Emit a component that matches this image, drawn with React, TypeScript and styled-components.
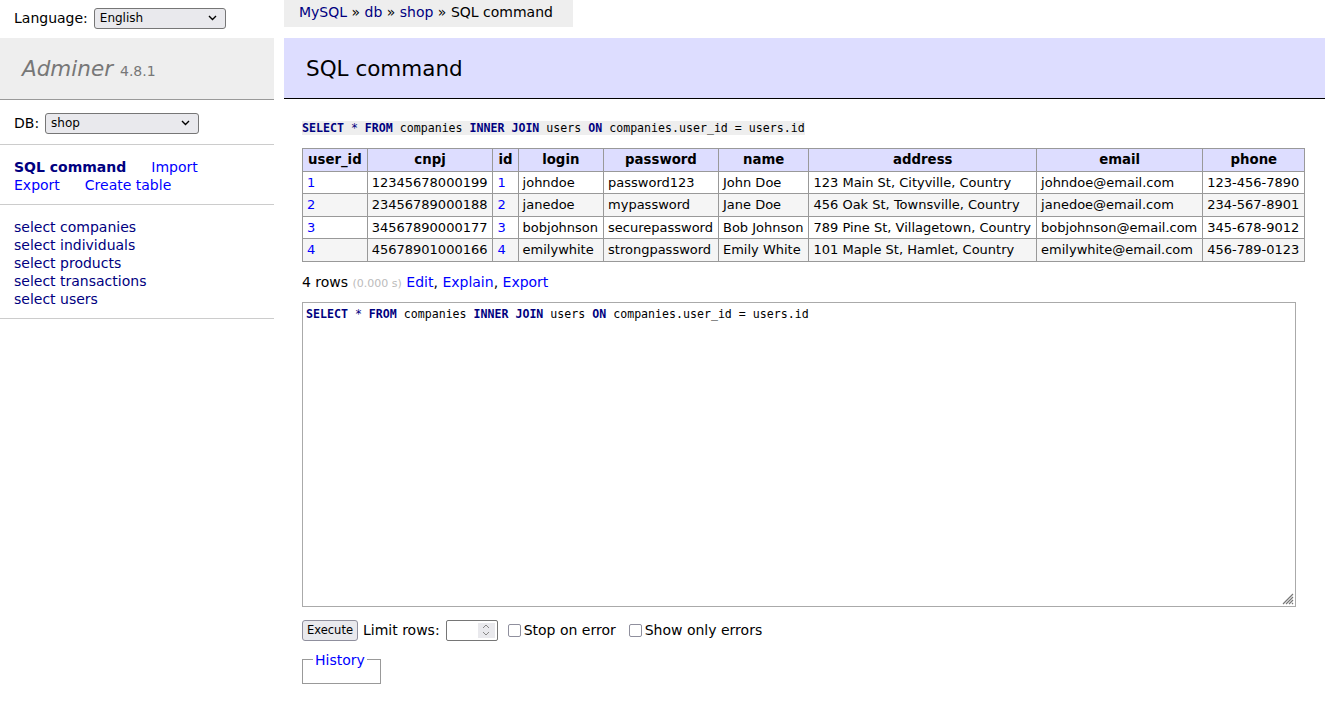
import styled, { createGlobalStyle } from "styled-components";

const GlobalStyle = createGlobalStyle`
  body {
    margin: 0;
    font: 14px/18px "DejaVu Sans", Verdana, sans-serif;
    color: #000;
    background: #fff;
  }
  a {
    color: #00f;
    text-decoration: none;
  }
`;

const Page = styled.div`
  display: flex;
  width: 1331px;
  min-height: 718px;
`;

const Sidebar = styled.div`
  width: 274px;
  flex-shrink: 0;
`;

const LangRow = styled.div`
  height: 38px;
  display: flex;
  align-items: center;
  padding-left: 14px;
  padding-bottom: 2px;
  gap: 6px;
  box-sizing: border-box;
`;

const Select = styled.div<{ w: number }>`
  width: ${(p) => p.w}px;
  height: 21px;
  box-sizing: border-box;
  border: 1px solid #767676;
  border-radius: 3px;
  background: #e9e9ed;
  display: flex;
  align-items: center;
  justify-content: space-between;
  padding: 0 8px 0 5px;
  font: 12px "DejaVu Sans", Arial, sans-serif;
  color: #000;
  svg {
    width: 9px;
    height: 6px;
  }
`;

const Logo = styled.div`
  height: 61px;
  background: #eee;
  border-bottom: 1px solid #999;
  display: flex;
  align-items: center;
  padding-left: 22px;
  color: #777;
  .name {
    font: italic 21.5px "DejaVu Sans", Verdana, sans-serif;
  }
  .ver {
    font-size: 14px;
    margin-left: 7px;
    margin-top: 5px;
  }
`;

const DbRow = styled.div`
  height: 45px;
  display: flex;
  align-items: center;
  padding-left: 14px;
  gap: 6px;
  border-bottom: 1px solid #ccc;
  padding-top: 2px;
  box-sizing: border-box;
`;

const MenuBlock = styled.div`
  padding: 13px 14px 10px;
  border-bottom: 1px solid #ccc;
`;

const Links = styled.div`
  display: flex;
  flex-wrap: wrap;
  width: 220px;
  column-gap: 25px;
  a.active {
    color: #000080;
    font-weight: bold;
  }
`;

const TableList = styled.ul`
  list-style: none;
  margin: 0;
  padding: 0;
  a {
    color: #000080;
  }
`;

const Content = styled.div`
  margin-left: 10px;
  width: 1041px;
`;

const Breadcrumb = styled.p`
  margin: 0;
  display: inline-block;
  background: #eee;
  padding: 0 15px 0 15px;
  height: 27px;
  line-height: 24px;
  width: 259px;
  a {
    color: #000080;
  }
`;

const Title = styled.h2`
  margin: 11px 0 0;
  height: 61px;
  box-sizing: border-box;
  background: #ddf;
  border-bottom: 1px solid #000;
  font: 21.5px/61px "DejaVu Sans", Verdana, sans-serif;
  padding-left: 22px;
`;

const Body = styled.div`
  padding-left: 18px;
`;

const Code = styled.code`
  display: inline-block;
  margin-top: 22px;
  background: #eee;
  font: 11.6px/14px "DejaVu Sans Mono", monospace;
  color: #000;
  b {
    color: #000080;
  }
`;

const Table = styled.table`
  margin-top: 12px;
  border-collapse: collapse;
  border: 1px solid #999;
  font-size: 13px;
  th,
  td {
    border: 1px solid #999;
    padding: 2px 5px 2px 4px;
    line-height: 17.5px;
    white-space: nowrap;
    text-align: left;
  }
  th {
    background: #ddf;
    text-align: center;
    padding: 2px 5px;
    font-size: 13.3px;
  }
  tbody tr:nth-child(2n) {
    background: #f5f5f5;
  }
`;

const Stats = styled.p`
  margin: 11px 0 0;
  .time {
    color: #bbb;
    font-size: 11px;
  }
`;

const Editor = styled.div`
  margin-top: 9px;
  width: 994px;
  height: 305px;
  box-sizing: border-box;
  border: 1px solid #aaa;
  position: relative;
  padding: 3px 3px;
  font: 11.6px/16px "DejaVu Sans Mono", monospace;
  b {
    color: #000080;
  }
  svg {
    position: absolute;
    right: 1px;
    bottom: 1px;
  }
`;

const Controls = styled.div`
  margin-top: 13px;
  display: flex;
  align-items: center;
  height: 21px;
`;

const Button = styled.div`
  height: 21px;
  box-sizing: border-box;
  border: 1px solid #8f8f9d;
  border-radius: 3px;
  background: #e9e9ed;
  font: 11.5px/19px "DejaVu Sans", Arial, sans-serif;
  padding: 0 4px;
  margin-right: 5px;
`;

const NumberInput = styled.div`
  width: 52px;
  height: 21px;
  box-sizing: border-box;
  border: 1px solid #767676;
  border-radius: 2px;
  margin-left: 6px;
  display: flex;
  justify-content: flex-end;
  padding: 2px;
  span {
    width: 17px;
    background: #e9e9ed;
    display: flex;
    align-items: center;
    justify-content: center;
  }
`;

const Check = styled.label`
  display: flex;
  align-items: center;
  margin-left: 10px;
  &::before {
    content: "";
    width: 13px;
    height: 13px;
    box-sizing: border-box;
    border: 1px solid #8f8f9d;
    border-radius: 2px;
    margin-right: 3px;
  }
  & + & {
    margin-left: 13px;
  }
`;

const History = styled.fieldset`
  margin: 11px 0 0;
  width: 79px;
  height: 32px;
  box-sizing: border-box;
  border: 1px solid #999;
  padding: 0;
  legend {
    margin-left: 10px;
    padding: 0 2px;
    line-height: 16px;
  }
`;

const Arrow = () => (
  <svg viewBox="0 0 9 6">
    <path d="M1 1l3.5 3.5L8 1" fill="none" stroke="#000" strokeWidth="1.4" />
  </svg>
);

const columns = ["user_id", "cnpj", "id", "login", "password", "name", "address", "email", "phone"];

const rows = [
  ["1", "12345678000199", "1", "johndoe", "password123", "John Doe", "123 Main St, Cityville, Country", "johndoe@email.com", "123-456-7890"],
  ["2", "23456789000188", "2", "janedoe", "mypassword", "Jane Doe", "456 Oak St, Townsville, Country", "janedoe@email.com", "234-567-8901"],
  ["3", "34567890000177", "3", "bobjohnson", "securepassword", "Bob Johnson", "789 Pine St, Villagetown, Country", "bobjohnson@email.com", "345-678-9012"],
  ["4", "45678901000166", "4", "emilywhite", "strongpassword", "Emily White", "101 Maple St, Hamlet, Country", "emilywhite@email.com", "456-789-0123"],
];

const Query = () => (
  <>
    <b>SELECT</b> <span style={{ color: "#000080" }}>*</span> <b>FROM</b> companies <b>INNER JOIN</b> users <b>ON</b>{" "}
    companies.user_id = users.id
  </>
);

function App() {
  return (
    <>
      <GlobalStyle />
      <Page>
        <Sidebar>
          <LangRow>
            Language:
            <Select w={132}>
              English
              <Arrow />
            </Select>
          </LangRow>
          <Logo>
            <span className="name">Adminer</span>
            <span className="ver">4.8.1</span>
          </Logo>
          <DbRow>
            DB:
            <Select w={154}>
              shop
              <Arrow />
            </Select>
          </DbRow>
          <MenuBlock>
            <Links>
              <a className="active">SQL command</a>
              <a>Import</a>
              <a>Export</a>
              <a>Create table</a>
            </Links>
          </MenuBlock>
          <MenuBlock>
            <TableList>
              {["companies", "individuals", "products", "transactions", "users"].map((t) => (
                <li key={t}>
                  <a>select {t}</a>
                </li>
              ))}
            </TableList>
          </MenuBlock>
        </Sidebar>
        <Content>
          <Breadcrumb>
            <a>MySQL</a> » <a>db</a> » <a>shop</a> » SQL command
          </Breadcrumb>
          <Title>SQL command</Title>
          <Body>
            <Code>
              <Query />
            </Code>
            <Table>
              <thead>
                <tr>
                  {columns.map((c) => (
                    <th key={c}>{c}</th>
                  ))}
                </tr>
              </thead>
              <tbody>
                {rows.map((r) => (
                  <tr key={r[0]}>
                    {r.map((v, i) => (
                      <td key={i}>{i === 0 || i === 2 ? <a>{v}</a> : v}</td>
                    ))}
                  </tr>
                ))}
              </tbody>
            </Table>
            <Stats>
              4 rows <span className="time">(0.000 s)</span> <a>Edit</a>, <a>Explain</a>, <a>Export</a>
            </Stats>
            <Editor>
              <Query />
              <svg width="14" height="14" viewBox="0 0 14 14">
                <path d="M13 3L3 13M13 6L6 13M13 9L9 13M13 12L12 13" stroke="#777" strokeWidth="1.2" />
              </svg>
            </Editor>
            <Controls>
              <Button>Execute</Button>
              Limit rows:
              <NumberInput>
                <span>
                  <svg width="8" height="12" viewBox="0 0 8 12">
                    <path d="M1 4l3-3 3 3M1 8l3 3 3-3" fill="none" stroke="#888" strokeWidth="1" />
                  </svg>
                </span>
              </NumberInput>
              <Check>Stop on error</Check>
              <Check>Show only errors</Check>
            </Controls>
            <History>
              <legend>
                <a>History</a>
              </legend>
            </History>
          </Body>
        </Content>
      </Page>
    </>
  );
}

export default App;
